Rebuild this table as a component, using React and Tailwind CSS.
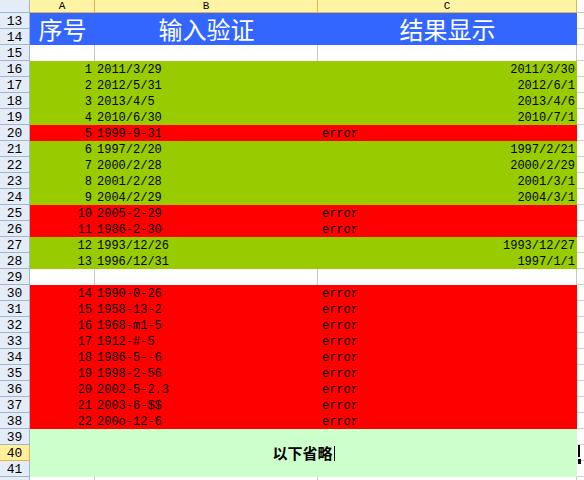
import React from "react";

const data = [
  { r: 16, n: 1, v: "2011/3/29", o: "2011/3/30" },
  { r: 17, n: 2, v: "2012/5/31", o: "2012/6/1" },
  { r: 18, n: 3, v: "2013/4/5", o: "2013/4/6" },
  { r: 19, n: 4, v: "2010/6/30", o: "2010/7/1" },
  { r: 20, n: 5, v: "1999-9-31", o: null },
  { r: 21, n: 6, v: "1997/2/20", o: "1997/2/21" },
  { r: 22, n: 7, v: "2000/2/28", o: "2000/2/29" },
  { r: 23, n: 8, v: "2001/2/28", o: "2001/3/1" },
  { r: 24, n: 9, v: "2004/2/29", o: "2004/3/1" },
  { r: 25, n: 10, v: "2005-2-29", o: null },
  { r: 26, n: 11, v: "1986-2-30", o: null },
  { r: 27, n: 12, v: "1993/12/26", o: "1993/12/27" },
  { r: 28, n: 13, v: "1996/12/31", o: "1997/1/1" },
  { r: 29, blank: true },
  { r: 30, n: 14, v: "1990-0-26", o: null },
  { r: 31, n: 15, v: "1958-13-2", o: null },
  { r: 32, n: 16, v: "1968-m1-5", o: null },
  { r: 33, n: 17, v: "1912-#-5", o: null },
  { r: 34, n: 18, v: "1986-5--6", o: null },
  { r: 35, n: 19, v: "1998-2-56", o: null },
  { r: 36, n: 20, v: "2002-5-2.3", o: null },
  { r: 37, n: 21, v: "2003-6-$$", o: null },
  { r: 38, n: 22, v: "200o-12-6", o: null },
];

const mono = { fontFamily: '"Liberation Mono", "DejaVu Sans Mono", monospace' };
const cjk = { fontFamily: '"Noto Sans CJK SC", "Noto Sans", sans-serif' };

function RowHead({ n, sel }) {
  return (
    <div
      className={
        sel
          ? "w-[30px] h-4 shrink-0 border-b border-r border-[#e2b350] bg-[#ffef9a] text-center text-[13px] leading-[17px] text-black"
          : "w-[30px] h-4 shrink-0 border-b border-r border-[#9eb6ce] bg-[#e4ecf7] text-center text-[13px] leading-[17px] text-black"
      }
      style={mono}
    >
      {n}
    </div>
  );
}

function Strip({ children }) {
  return <div className="relative w-[7px] h-4 shrink-0 bg-white border-b border-[#d0d0d0]">{children}</div>;
}

function BlankRow({ r }) {
  return (
    <div className="flex h-4">
      <RowHead n={r} />
      <div className="w-[65px] h-4 bg-white border-r border-[#c8c8c8]" />
      <div className="w-[223px] h-4 bg-white border-r border-[#c8c8c8]" />
      <div className="w-[259px] h-4 bg-white border-r border-[#c8c8c8]" />
      <Strip />
    </div>
  );
}

function DataRow({ d }) {
  const ok = d.o !== null;
  return (
    <div className="flex h-4">
      <RowHead n={d.r} />
      <div
        className={ok ? "flex w-[547px] h-4 bg-[#99cc00] text-[12px] leading-[18px] text-black" : "flex w-[547px] h-4 bg-[#ff0000] text-[12px] leading-[18px] text-black"}
        style={mono}
      >
        <div className="w-[65px] text-right pr-[3px] whitespace-pre">{d.n}</div>
        <div className="w-[223px] pl-[2px] whitespace-pre">{d.v}</div>
        {ok ? (
          <div className="w-[259px] text-right pr-[2px] whitespace-pre">{d.o}</div>
        ) : (
          <div className="w-[259px] pl-[4px] whitespace-pre">error</div>
        )}
      </div>
      <Strip />
    </div>
  );
}

export default function App() {
  return (
    <div className="w-[584px] h-[480px] overflow-hidden bg-white select-none">
      {/* column header */}
      <div className="flex h-[13px]">
        <div className="w-[30px] h-[13px] bg-[#e4ecf7] border-b border-r border-[#9eb6ce]" />
        <div className="w-[65px] h-[13px] bg-[#fff3a4] border-b border-r border-[#e2b350] flex items-center justify-center text-[11px] leading-none text-black" style={mono}>A</div>
        <div className="w-[223px] h-[13px] bg-[#fff3a4] border-b border-r border-[#e2b350] flex items-center justify-center text-[11px] leading-none text-black" style={mono}>B</div>
        <div className="w-[259px] h-[13px] bg-[#fff3a4] border-b border-r border-[#e2b350] flex items-center justify-center text-[11px] leading-none text-black" style={mono}>C</div>
        <div className="w-[7px] h-[13px] bg-white border-b border-[#c8c8c8]" />
      </div>

      {/* rows 13-14 merged header */}
      <div className="flex h-8">
        <div className="flex flex-col">
          <RowHead n={13} />
          <RowHead n={14} />
        </div>
        <div className="flex w-[547px] h-8 bg-[#3366ff] text-white text-[24px] leading-8" style={cjk}>
          <div className="w-[65px] text-center">序号</div>
          <div className="w-[223px] text-center">输入验证</div>
          <div className="w-[259px] text-center">结果显示</div>
        </div>
        <div className="flex flex-col">
          <Strip />
          <Strip />
        </div>
      </div>

      <BlankRow r={15} />

      {data.map((d) => (d.blank ? <BlankRow key={d.r} r={d.r} /> : <DataRow key={d.r} d={d} />))}

      {/* rows 39-41 merged */}
      <div className="flex h-12">
        <div className="flex flex-col">
          <RowHead n={39} />
          <RowHead n={40} sel />
          <RowHead n={41} />
        </div>
        <div className="flex w-[547px] h-12 bg-[#ccffcc] items-center justify-center">
          <span className="text-[15px] font-bold text-black leading-4" style={cjk}>以下省略</span>
          <span className="w-px h-[15px] bg-black ml-px" />
        </div>
        <div className="flex flex-col">
          <Strip />
          <Strip>
            <div className="absolute left-[1px] top-0 w-[2px] h-[12px] bg-black" />
          </Strip>
          <Strip>
            <div className="absolute left-[1px] -top-[2px] w-[3px] h-[5px] bg-black" />
          </Strip>
        </div>
      </div>

      <BlankRow r="" />
    </div>
  );
}
